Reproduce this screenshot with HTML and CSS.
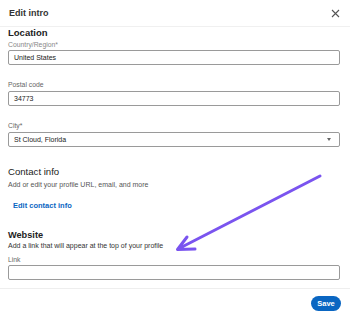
FILE: index.html
```html
<!DOCTYPE html>
<html>
<head>
<meta charset="utf-8">
<link rel="stylesheet" href="styles.css">
</head>
<body>
<div class="modal">
  <header class="head">
    <span class="title">Edit intro</span>
    <svg class="close" width="9" height="9" viewBox="0 0 9 9"><path d="M1 1L8 8M8 1L1 8" stroke="#555" stroke-width="1.1"/></svg>
  </header>
  <div class="body">
    <h2 class="h-loc">Location</h2>
    <div class="label l1">Country/Region*</div>
    <div class="input">United States</div>
    <div class="label l2">Postal code</div>
    <div class="input">34773</div>
    <div class="label l2">City*</div>
    <div class="input select">St Cloud, Florida<span class="caret"></span></div>
    <h3 class="h-contact">Contact info</h3>
    <div class="desc">Add or edit your profile URL, email, and more</div>
    <a class="link">Edit contact info</a>
    <h2 class="h-web">Website</h2>
    <div class="desc d2">Add a link that will appear at the top of your profile</div>
    <div class="label l3">Link</div>
    <div class="input"></div>
  </div>
  <footer class="foot">
    <button class="save">Save</button>
  </footer>
  <svg class="arrow" width="350" height="316" viewBox="0 0 350 316"><path d="M320 176L178 249M187 237L177.5 249.5L195 249" fill="none" stroke="#7a54ef" stroke-width="3" stroke-linecap="round" stroke-linejoin="round"/></svg>
</div>
</body>
</html>
```
FILE: styles.css
```css
* { box-sizing: border-box; }
html, body { margin: 0; padding: 0; background: #fff; }
body { font-family: "Liberation Sans", Arial, sans-serif; color: #1d1d1d; width: 350px; height: 316px; overflow: hidden; }
.modal { position: relative; width: 350px; height: 316px; }
.head { height: 27px; display: flex; align-items: center; justify-content: space-between; padding: 0 10px 0 9px; border-bottom: 1px solid #f0f0f0; }
.title { font-size: 9px; font-weight: bold; color: #333; }
.close { display: block; }
.body { padding: 0 10px 0 8px; }
.h-loc { margin: 0; font-size: 9.5px; font-weight: bold; line-height: 12px; color: #222; }
.label { font-size: 6.8px; color: #666; line-height: 9px; }
.l1 { margin-top: 1px; margin-bottom: 1px; color: #888; }
.l2 { margin-top: 15px; margin-bottom: 2px; }
.l3 { margin-top: 5px; margin-bottom: 1px; }
.input { height: 15px; border: 1px solid #9a9a9a; border-radius: 2px; font-size: 7px; line-height: 13px; padding-left: 5px; color: #222; position: relative; }
.caret { position: absolute; right: 8px; top: 5px; width: 0; height: 0; border-left: 2.5px solid transparent; border-right: 2.5px solid transparent; border-top: 3px solid #666; }
.h-contact { margin: 18px 0 0; font-size: 9.6px; font-weight: normal; line-height: 13px; color: #222; }
.desc { font-size: 7px; color: #555; line-height: 9px; margin-top: 2px; }
.link { display: block; margin: 12px 0 0 5px; font-size: 7.5px; font-weight: bold; color: #0a66c2; line-height: 10px; }
.h-web { margin: 18px 0 0; font-size: 9.2px; font-weight: bold; line-height: 12px; color: #222; }
.d2 { margin-top: 0; color: #333; }
.foot { margin-top: 8px; border-top: 1px solid #eee; padding: 7px 9px 0 0; display: flex; justify-content: flex-end; }
.save { font-family: inherit; font-size: 7.5px; font-weight: bold; color: #fff; background: #0a66c2; border: none; border-radius: 8px; width: 30px; height: 15px; padding: 0; }
.arrow { position: absolute; left: 0; top: 0; pointer-events: none; }
```
